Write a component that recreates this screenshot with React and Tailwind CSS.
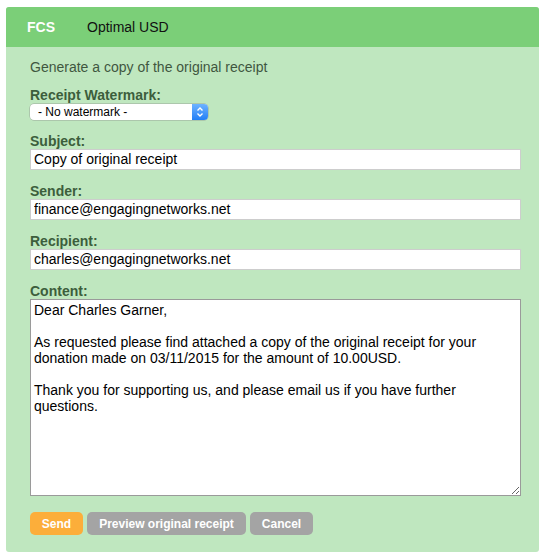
import React from 'react';

const font = { fontFamily: '"Liberation Sans", Arial, sans-serif' };

function Field({ label, value }) {
    return (
        <div className="flex flex-col">
            <label className="h-4 text-[14px] leading-4 font-bold text-[#3c5e3c]">{label}</label>
            <input
                type="text"
                defaultValue={value}
                className="h-[21px] w-full bg-white border border-[#cdcdcd] px-[3px] text-[14px] text-black outline-none"
            />
        </div>
    );
}

export default function App() {
    const content = "Dear Charles Garner,\n\nAs requested please find attached a copy of the original receipt for your donation made on 03/11/2015 for the amount of 10.00USD.\n\nThank you for supporting us, and please email us if you have further questions.";

    return (
        <div className="bg-white w-[545px] h-[560px] pt-[7px] pl-[6px]" style={font}>
            <div className="w-[533px] rounded-[3px] overflow-hidden bg-[#bfe7bf]">
                {/* Header bar */}
                <div className="h-10 bg-[#7bcf78] flex items-center text-[14px]">
                    <span className="ml-[21px] font-bold text-white">FCS</span>
                    <span className="ml-[32px] text-[#111]">Optimal USD</span>
                </div>

                <div className="pl-6 pr-[18px] pt-3 pb-[17px] flex flex-col">
                    <p className="h-4 leading-4 text-[14px] text-[#3f573f]">Generate a copy of the original receipt</p>

                    <div className="mt-3 flex flex-col">
                        <label className="h-4 text-[14px] leading-4 font-bold text-[#3c5e3c]">Receipt Watermark:</label>
                        <div className="mt-px h-4 w-[178px] flex bg-white rounded-[4px] shadow-[0_0_0_0.5px_#9aa89a] overflow-hidden">
                            <span className="flex-1 pl-2 text-[12px] leading-4 text-black">- No watermark -</span>
                            <span className="w-4 h-4 flex items-center justify-center bg-gradient-to-b from-[#6db3ff] to-[#1f7ef6]">
                                <svg width="8" height="12" viewBox="0 0 8 12" fill="none" stroke="white" strokeWidth="1.4">
                                    <path d="M1.5 4.5 L4 2 L6.5 4.5" />
                                    <path d="M1.5 7.5 L4 10 L6.5 7.5" />
                                </svg>
                            </span>
                        </div>
                    </div>

                    <div className="mt-[13px] flex flex-col gap-[13px]">
                        <Field label="Subject:" value="Copy of original receipt" />
                        <Field label="Sender:" value="finance@engagingnetworks.net" />
                        <Field label="Recipient:" value="charles@engagingnetworks.net" />
                        <div className="flex flex-col">
                            <label className="h-4 text-[14px] leading-4 font-bold text-[#3c5e3c]">Content:</label>
                            <textarea
                                defaultValue={content}
                                className="h-[197px] w-full bg-white border border-[#9a9a9a] px-[3px] py-[2px] text-[14px] leading-4 text-black outline-none resize"
                                style={font}
                            />
                        </div>
                    </div>

                    <div className="mt-4 flex gap-1 text-[12px] font-bold text-white">
                        <button className="h-[23px] w-[53px] rounded-[5px] bg-[#fcae3a]">Send</button>
                        <button className="h-[23px] w-[159px] rounded-[5px] bg-[#a4a4a4]">Preview original receipt</button>
                        <button className="h-[23px] w-[63px] rounded-[5px] bg-[#a4a4a4]">Cancel</button>
                    </div>
                </div>
            </div>
        </div>
    );
}
